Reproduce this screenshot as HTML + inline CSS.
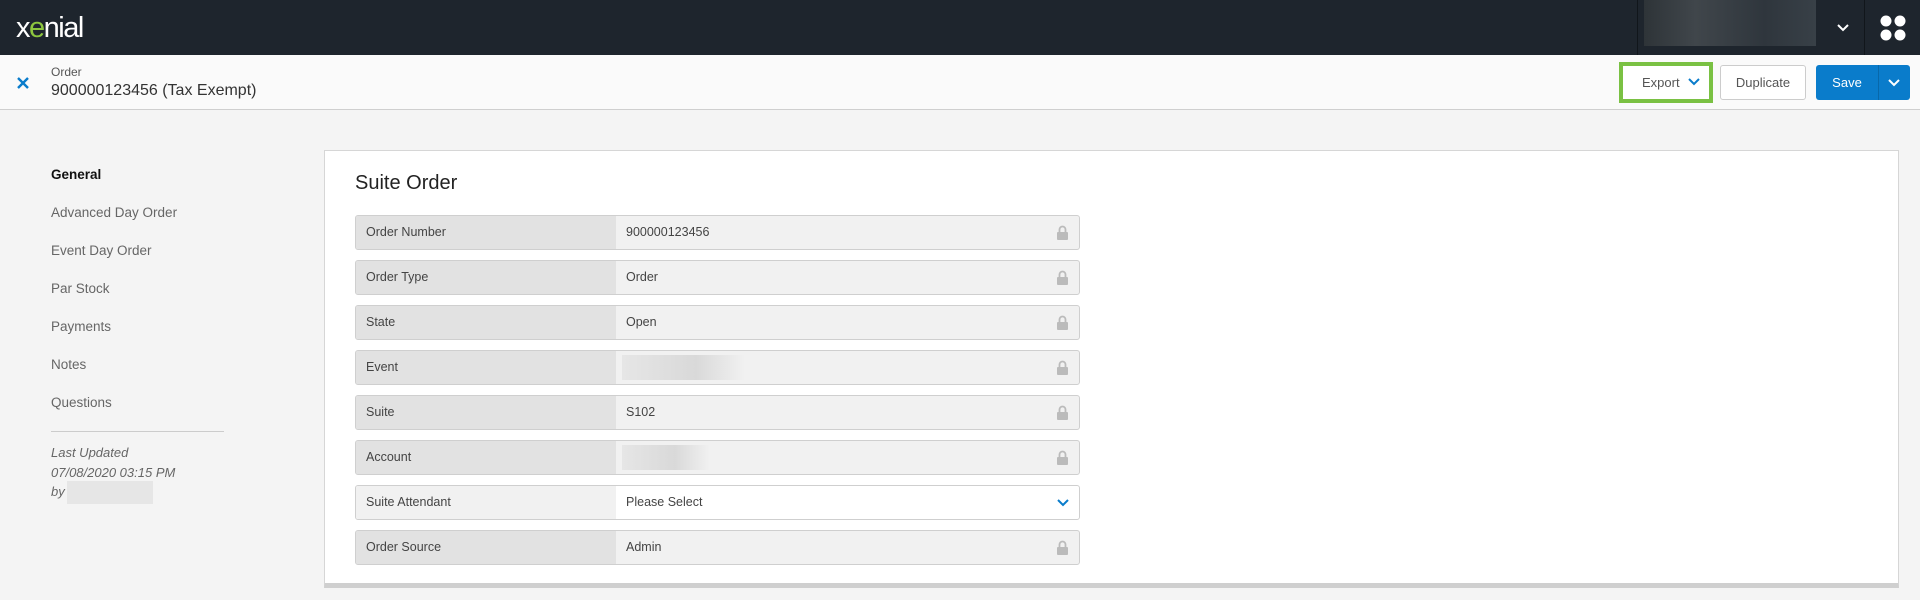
<!DOCTYPE html>
<html><head><meta charset="utf-8"><style>
*{box-sizing:border-box;margin:0;padding:0}
body{width:1920px;height:600px;background:#f4f4f4;font-family:"Liberation Sans",sans-serif;position:relative;overflow:hidden;color:#333}
.a{position:absolute}
.top{left:0;top:0;width:1920px;height:55px;background:#1e252d}
.sub{left:0;top:55px;width:1920px;height:55px;background:#fafafa;border-bottom:1px solid #cfcfcf}
.nav{left:51px;font-size:13.5px;color:#666}
.panel{left:324px;top:150px;width:1575px;height:438px;background:#fff;border:1px solid #d6d6d6;border-bottom:5px solid #cfcfcf}
.row{left:355px;width:725px;height:35px;border:1px solid #cfcfcf;border-radius:3px;background:#f1f1f1;overflow:hidden}
.row .l{position:absolute;left:0;top:0;width:260px;height:100%;background:#e2e2e2;font-size:12.5px;color:#444;padding-left:10px;line-height:33px}
.row .v{position:absolute;left:270px;top:0;font-size:12.5px;color:#444;line-height:33px}
.lock{position:absolute;right:11px;top:9px;width:11px;height:15px}
.blur{position:absolute;left:266px;top:4px;height:25px;background:linear-gradient(90deg,#e6e6e6,#d9d9d9 60%,#f1f1f1)}
</style></head><body>
<div class="a top"></div>
<div class="a" style="left:16px;top:10px;font-size:29px;color:#fff;letter-spacing:-1.5px;line-height:36px">x<span style="color:#8dc63f">e</span>nial</div>
<div class="a" style="left:1637px;top:0;width:1px;height:55px;background:#11161b"></div>
<div class="a" style="left:1644px;top:0;width:172px;height:46px;background:linear-gradient(90deg,#2e3438,#40464b 30%,#2f363d 70%,#384047)"></div>
<svg class="a" style="left:1836px;top:23px" width="14" height="10" viewBox="0 0 14 10"><path d="M2 2l5 5 5-5" stroke="#fff" stroke-width="2" fill="none"/></svg>
<div class="a" style="left:1864px;top:0;width:1px;height:55px;background:#11161b"></div>
<svg class="a" style="left:1879px;top:14px" width="28" height="28"><circle cx="7" cy="7" r="5.5" fill="#fff"/><circle cx="21" cy="7" r="5.5" fill="#fff"/><circle cx="7" cy="21" r="5.5" fill="#fff"/><circle cx="21" cy="21" r="5.5" fill="#fff"/></svg>
<div class="a sub"></div>
<svg class="a" style="left:16px;top:76px" width="14" height="14"><path d="M2 2l10 10M12 2L2 12" stroke="#0a7ccb" stroke-width="2.4"/></svg>
<div class="a" style="left:51px;top:65px;font-size:12px;color:#555">Order</div>
<div class="a" style="left:51px;top:82px;font-size:16px;color:#333">900000123456 (Tax Exempt)</div>
<div class="a" style="left:1619px;top:62px;width:94px;height:41px;border:4px solid #7ac143;background:#fff"></div>
<div class="a" style="left:1642px;top:75px;font-size:13px;color:#555">Export</div>
<svg class="a" style="left:1688px;top:77px" width="12" height="9"><path d="M1 2l5 5 5-5" stroke="#0a7ccb" stroke-width="2" fill="none"/></svg>
<div class="a" style="left:1720px;top:65px;width:86px;height:35px;border:1px solid #ccc;border-radius:3px;background:#fff;font-size:13px;color:#555;text-align:center;line-height:33px">Duplicate</div>
<div class="a" style="left:1816px;top:65px;width:94px;height:35px;border-radius:3px;background:#0a7ccb"></div>
<div class="a" style="left:1878px;top:65px;width:1px;height:35px;background:#0868aa"></div>
<div class="a" style="left:1816px;top:65px;width:62px;height:35px;color:#fff;font-size:13px;text-align:center;line-height:35px">Save</div>
<svg class="a" style="left:1887px;top:78px" width="14" height="9"><path d="M2 2l5 5 5-5" stroke="#fff" stroke-width="2" fill="none"/></svg>

<div class="a nav" style="top:167px;color:#111;font-weight:bold">General</div>
<div class="a nav" style="top:205px">Advanced Day Order</div>
<div class="a nav" style="top:243px">Event Day Order</div>
<div class="a nav" style="top:281px">Par Stock</div>
<div class="a nav" style="top:319px">Payments</div>
<div class="a nav" style="top:357px">Notes</div>
<div class="a nav" style="top:395px">Questions</div>
<div class="a" style="left:51px;top:431px;width:173px;height:1px;background:#ccc"></div>
<div class="a nav" style="top:443px;font-style:italic;font-size:13px;line-height:19.5px">Last Updated<br>07/08/2020 03:15 PM<br>by</div>
<div class="a" style="left:67px;top:481px;width:86px;height:23px;background:#e6e6e6"></div>

<div class="a panel"></div>
<div class="a" style="left:355px;top:172px;font-size:20px;color:#222">Suite Order</div>

<div class="a row" style="top:215px"><div class="l">Order Number</div><div class="v">900000123456</div><svg class="lock" viewBox="0 0 11 15"><path d="M2.5 7V4.5a3 3 0 016 0V7" stroke="#bbb" stroke-width="1.8" fill="none"/><rect x="0" y="7" width="11" height="8" rx="1" fill="#bbb"/></svg></div>
<div class="a row" style="top:260px"><div class="l">Order Type</div><div class="v">Order</div><svg class="lock" viewBox="0 0 11 15"><path d="M2.5 7V4.5a3 3 0 016 0V7" stroke="#bbb" stroke-width="1.8" fill="none"/><rect x="0" y="7" width="11" height="8" rx="1" fill="#bbb"/></svg></div>
<div class="a row" style="top:305px"><div class="l">State</div><div class="v">Open</div><svg class="lock" viewBox="0 0 11 15"><path d="M2.5 7V4.5a3 3 0 016 0V7" stroke="#bbb" stroke-width="1.8" fill="none"/><rect x="0" y="7" width="11" height="8" rx="1" fill="#bbb"/></svg></div>
<div class="a row" style="top:350px"><div class="l">Event</div><div class="blur" style="width:123px"></div><svg class="lock" viewBox="0 0 11 15"><path d="M2.5 7V4.5a3 3 0 016 0V7" stroke="#bbb" stroke-width="1.8" fill="none"/><rect x="0" y="7" width="11" height="8" rx="1" fill="#bbb"/></svg></div>
<div class="a row" style="top:395px"><div class="l">Suite</div><div class="v">S102</div><svg class="lock" viewBox="0 0 11 15"><path d="M2.5 7V4.5a3 3 0 016 0V7" stroke="#bbb" stroke-width="1.8" fill="none"/><rect x="0" y="7" width="11" height="8" rx="1" fill="#bbb"/></svg></div>
<div class="a row" style="top:440px"><div class="l">Account</div><div class="blur" style="width:88px"></div><svg class="lock" viewBox="0 0 11 15"><path d="M2.5 7V4.5a3 3 0 016 0V7" stroke="#bbb" stroke-width="1.8" fill="none"/><rect x="0" y="7" width="11" height="8" rx="1" fill="#bbb"/></svg></div>
<div class="a row" style="top:485px;background:#fff"><div class="l" style="background:#f1f1f1">Suite Attendant</div><div class="v">Please Select</div><svg style="position:absolute;right:10px;top:13px" width="12" height="8"><path d="M1 1l5 5 5-5" stroke="#0a7ccb" stroke-width="2" fill="none"/></svg></div>
<div class="a row" style="top:530px"><div class="l">Order Source</div><div class="v">Admin</div><svg class="lock" viewBox="0 0 11 15"><path d="M2.5 7V4.5a3 3 0 016 0V7" stroke="#bbb" stroke-width="1.8" fill="none"/><rect x="0" y="7" width="11" height="8" rx="1" fill="#bbb"/></svg></div>
</body></html>
